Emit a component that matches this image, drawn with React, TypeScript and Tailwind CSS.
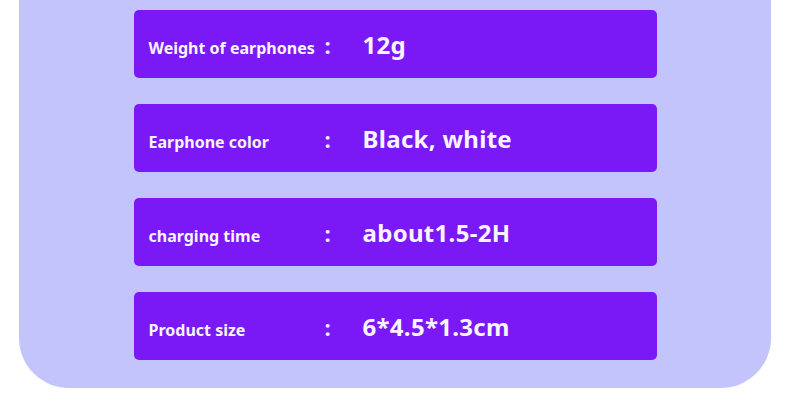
const specs = [
  { label: "Weight of earphones", value: "12g" },
  { label: "Earphone color", value: "Black, white" },
  { label: "charging time", value: "about1.5-2H" },
  { label: "Product size", value: "6*4.5*1.3cm" },
];

export default function App() {
  return (
    <div className="w-full h-[418px] bg-white overflow-hidden px-[19px] font-['Noto_Sans',sans-serif]">
      <div className="w-[752px] bg-[#c4c4fc] rounded-b-[50px] pt-[10px] pb-[28px] flex flex-col items-center gap-[26px]">
        {specs.map((s) => (
          <div
            key={s.label}
            className="w-[523px] h-[68px] rounded-[5px] bg-[#7a19f5] flex items-baseline pt-[17px] pl-[15px] text-[#f8f4ff]"
          >
            <span className="w-[176px] text-[16px] font-bold whitespace-nowrap">{s.label}</span>
            <span className="w-[38px] text-[22px] font-bold">:</span>
            <span className="text-[24px] font-bold tracking-[0.3px]">{s.value}</span>
          </div>
        ))}
      </div>
    </div>
  );
}
